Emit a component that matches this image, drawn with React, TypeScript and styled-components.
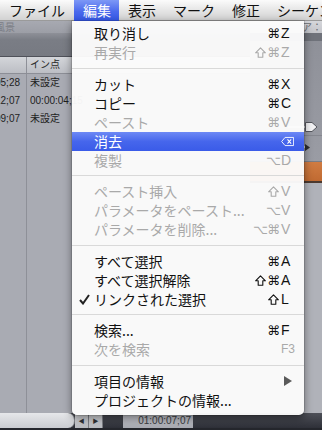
import styled, { createGlobalStyle } from "styled-components";

const GlobalStyle = createGlobalStyle`
  html, body {
    margin: 0;
    padding: 0;
    background: #2e3038;
  }
  body {
    font-family: "Noto Sans CJK JP", "Noto Sans", sans-serif;
  }
`;

type Shortcut = { mods?: string; key?: string; icon?: "delete" };
type Item = {
  label: string;
  disabled?: boolean;
  checked?: boolean;
  active?: boolean;
  sc?: Shortcut;
  submenu?: boolean;
};
type Entry = Item | "sep";

const menuTitles = ["ファイル", "編集", "表示", "マーク", "修正", "シーケンス"];

const entries: Entry[] = [
  { label: "取り消し", sc: { mods: "⌘", key: "Z" } },
  { label: "再実行", disabled: true, sc: { mods: "⇧⌘", key: "Z" } },
  "sep",
  { label: "カット", sc: { mods: "⌘", key: "X" } },
  { label: "コピー", sc: { mods: "⌘", key: "C" } },
  { label: "ペースト", disabled: true, sc: { mods: "⌘", key: "V" } },
  { label: "消去", active: true, sc: { icon: "delete" } },
  { label: "複製", disabled: true, sc: { mods: "⌥", key: "D" } },
  "sep",
  { label: "ペースト挿入", disabled: true, sc: { mods: "⇧", key: "V" } },
  { label: "パラメータをペースト...", disabled: true, sc: { mods: "⌥", key: "V" } },
  { label: "パラメータを削除...", disabled: true, sc: { mods: "⌥⌘", key: "V" } },
  "sep",
  { label: "すべて選択", sc: { mods: "⌘", key: "A" } },
  { label: "すべて選択解除", sc: { mods: "⇧⌘", key: "A" } },
  { label: "リンクされた選択", checked: true, sc: { mods: "⇧", key: "L" } },
  "sep",
  { label: "検索...", sc: { mods: "⌘", key: "F" } },
  { label: "次を検索", disabled: true, sc: { key: "F3" } },
  "sep",
  { label: "項目の情報", submenu: true },
  { label: "プロジェクトの情報..." },
];

const clips = [
  { dur: "00:00:05;28", inPoint: "未設定" },
  { dur: "00:00:12;07", inPoint: "00:00:04;15" },
  { dur: "00:00:09;07", inPoint: "未設定" },
];

function DeleteIcon() {
  return (
    <svg width="16" height="11" viewBox="0 0 16 11">
      <path d="M5 0.5 H15.5 V10.5 H5 L0.8 5.5 Z" fill="none" stroke="#fff" strokeWidth="1.1" />
      <path d="M8 3 L12.5 8 M12.5 3 L8 8" stroke="#fff" strokeWidth="1.3" />
    </svg>
  );
}

function ShiftIcon() {
  return (
    <svg width="11" height="11" viewBox="0 0 11 11">
      <path d="M5.5 0.8 L10.4 5.8 H7.8 V10.3 H3.2 V5.8 H0.6 Z" fill="none" stroke="currentColor" strokeWidth="1.1" strokeLinejoin="round" />
    </svg>
  );
}

function CheckIcon() {
  return (
    <svg width="11" height="11" viewBox="0 0 11 11">
      <path d="M1 6 L4 9.5 L10 1" fill="none" stroke="#222" strokeWidth="2" />
    </svg>
  );
}

export default function App() {
  return (
    <>
      <GlobalStyle />
      <ScreenSld>
        <MenuBarSld>
          {menuTitles.map((t) => (
            <MenuTitleSld key={t} $open={t === "編集"}>
              {t}
            </MenuTitleSld>
          ))}
        </MenuBarSld>

        <MainSld>
          <BrowserSld>
            <TitleStripSld>
              <FadedTitleSld>風景</FadedTitleSld>
            </TitleStripSld>
            <ToolbarSld />
            <HeaderRowSld>
              <DurCellSld />
              <InCellSld>イン点</InCellSld>
            </HeaderRowSld>
            <ListBodySld>
              {clips.map((c) => (
                <ClipRowSld key={c.dur}>
                  <DurCellSld>
                    <span>{c.dur}</span>
                  </DurCellSld>
                  <InCellSld>{c.inPoint}</InCellSld>
                </ClipRowSld>
              ))}
              <ClipRowSld $fill>
                <DurCellSld />
                <InCellSld />
              </ClipRowSld>
            </ListBodySld>
          </BrowserSld>

          <ViewerSld>
            <ViewerStripSld>ア：</ViewerStripSld>
            <ViewerBandSld />
            <ControlsSld>
              <SliderRowSld>
                <TrackSld />
                <svg width="13" height="12" viewBox="0 0 13 12">
                  <path d="M0.5 1.5 H7 L12 6 L7 10.5 H0.5 Z" fill="#f2f2f4" stroke="#55575e" />
                </svg>
              </SliderRowSld>
              <SmallRowSld>
                <TrackSld />
                <svg width="5" height="7" viewBox="0 0 5 7">
                  <path d="M0 0 L5 3.5 L0 7 Z" fill="#2a2c30" />
                </svg>
              </SmallRowSld>
            </ControlsSld>
            <OrangeBarSld />
            <LowerPanelSld />
          </ViewerSld>
        </MainSld>

        <BottomBarSld>
          <ScrollTrackSld />
          <ArrowBtnSld>◀</ArrowBtnSld>
          <ArrowBtnSld>▶</ArrowBtnSld>
          <GapSld />
          <TimecodeSld>01:00:07;07</TimecodeSld>
        </BottomBarSld>

        <DropdownSld>
          {entries.map((e, i) =>
            e === "sep" ? (
              <SeparatorSld key={"sep" + i} />
            ) : (
              <ItemSld key={e.label} $disabled={e.disabled} $active={e.active}>
                <CheckColSld>{e.checked && <CheckIcon />}</CheckColSld>
                <LabelSld>{e.label}</LabelSld>
                {e.sc && (
                  <ShortcutSld>
                    {(e.sc.mods || "").split("").map((m, j) => (
                      <ModSld key={j}>{m === "⇧" ? <ShiftIcon /> : m}</ModSld>
                    ))}
                    <KeySld $small={e.sc.key === "F3"}>
                      {e.sc.icon === "delete" ? <DeleteIcon /> : e.sc.key}
                    </KeySld>
                  </ShortcutSld>
                )}
                {e.submenu && (
                  <SubArrowSld>
                    <svg width="8" height="10" viewBox="0 0 8 10">
                      <path d="M0 0 L8 5 L0 10 Z" fill="#5a5a5a" />
                    </svg>
                  </SubArrowSld>
                )}
              </ItemSld>
            )
          )}
        </DropdownSld>
      </ScreenSld>
    </>
  );
}

const ScreenSld = styled.div`
  position: relative;
  width: 322px;
  height: 430px;
  overflow: hidden;
  display: flex;
  flex-direction: column;
  background: #2e3038;
`;

const MenuBarSld = styled.div`
  display: flex;
  height: 21px;
  flex-shrink: 0;
  background: linear-gradient(#fbfbfb, #e4e4e4 55%, #d2d2d2);
  border-bottom: 1px solid #9a9a9a;
  box-sizing: border-box;
  white-space: nowrap;
`;

const MenuTitleSld = styled.div<{ $open?: boolean }>`
  height: 21px;
  line-height: 21px;
  padding: 0 8px 0 9px;
  font-size: 14px;
  color: ${(p) => (p.$open ? "#fff" : "#111")};
  background: ${(p) => (p.$open ? "linear-gradient(#7d98f6, #4a69ec 55%, #3457e6)" : "transparent")};
  flex-shrink: 0;
  &:first-child {
    padding-right: 9px;
  }
`;

const MainSld = styled.div`
  flex: 1;
  display: grid;
  grid-template-columns: 250px 1fr;
  min-height: 0;
`;

const BrowserSld = styled.div`
  display: flex;
  flex-direction: column;
  background: #a9abb3;
  min-height: 0;
`;

const TitleStripSld = styled.div`
  height: 12px;
  background: linear-gradient(#a7a9b1, #9c9ea6);
  overflow: hidden;
  display: flex;
  align-items: center;
`;

const FadedTitleSld = styled.span`
  font-size: 10px;
  color: #7c7e86;
  margin-left: -5px;
  line-height: 12px;
`;

const ToolbarSld = styled.div`
  height: 23px;
  background: linear-gradient(#8e9098, #7a7d85 30%, #777a82);
  border-bottom: 1px solid #4f5159;
`;

const HeaderRowSld = styled.div`
  display: flex;
  height: 16px;
  background: linear-gradient(#d4d6da, #bcbec4);
  border-bottom: 1px solid #8c8e96;
  font-size: 10px;
  color: #2a2a2a;
  line-height: 16px;
`;

const ListBodySld = styled.div`
  flex: 1;
  display: flex;
  flex-direction: column;
  background: #a9abb3;
`;

const ClipRowSld = styled.div<{ $fill?: boolean }>`
  display: flex;
  height: ${(p) => (p.$fill ? "auto" : "18px")};
  flex: ${(p) => (p.$fill ? 1 : "none")};
  line-height: 18px;
  font-size: 10px;
  color: #1e1e1e;
`;

const DurCellSld = styled.div`
  width: 27px;
  flex-shrink: 0;
  display: flex;
  justify-content: flex-end;
  overflow: hidden;
  border-right: 1px solid #8e9098;
  box-sizing: border-box;
  padding-right: 6px;
  font-family: "Liberation Sans", sans-serif;
  white-space: nowrap;
  & > span {
    flex-shrink: 0;
  }
`;

const InCellSld = styled.div`
  padding-left: 3px;
  white-space: nowrap;
  font-family: "Liberation Sans", "Noto Sans CJK JP", sans-serif;
`;

const ViewerSld = styled.div`
  display: flex;
  flex-direction: column;
  background: #b1b3ba;
`;

const ViewerStripSld = styled.div`
  height: 12px;
  background: linear-gradient(#d6d7db, #c4c5ca);
  font-size: 10px;
  line-height: 12px;
  color: #6a6c72;
  padding-left: 52px;
  white-space: nowrap;
`;

const ViewerBandSld = styled.div`
  height: 8px;
  background: #6f727a;
`;

const ControlsSld = styled.div`
  height: 121px;
  display: flex;
  flex-direction: column;
  padding-top: 78px;
  box-sizing: border-box;
  background: linear-gradient(#8f9199, #9a9ca4);
  border-bottom: 1px solid #7a7c84;
`;

const SliderRowSld = styled.div`
  display: flex;
  align-items: center;
  height: 16px;
  padding-left: 38px;
  border-bottom: 1px solid #85878f;
`;

const SmallRowSld = styled.div`
  display: flex;
  align-items: center;
  height: 14px;
  padding-left: 38px;
  margin-top: 4px;
`;

const TrackSld = styled.div`
  width: 17px;
  height: 2px;
  background: #e4e5e8;
`;

const OrangeBarSld = styled.div`
  height: 21px;
  background: linear-gradient(#d07c42, #c06a32);
  border-bottom: 2px solid #4c3a30;
  box-sizing: border-box;
`;

const LowerPanelSld = styled.div`
  flex: 1;
  background: #b0b2b9;
`;

const BottomBarSld = styled.div`
  display: flex;
  height: 17px;
  flex-shrink: 0;
  background: linear-gradient(#4e5058, #2e3038);
  border-bottom: 2px solid #24262c;
  box-sizing: border-box;
`;

const ScrollTrackSld = styled.div`
  width: 74px;
  background: linear-gradient(#e6e7ea, #c9cbd0);
  border-radius: 0 7px 7px 0;
  border-right: 1px solid #8a8c92;
`;

const ArrowBtnSld = styled.div`
  width: 13px;
  font-size: 6px;
  line-height: 15px;
  text-align: center;
  color: #303236;
  background: linear-gradient(#d8d9dc, #b8bac0);
  border-right: 1px solid #7c7e84;
`;

const GapSld = styled.div`
  width: 20px;
`;

const TimecodeSld = styled.div`
  width: 70px;
  font-size: 10px;
  line-height: 15px;
  text-align: right;
  padding-right: 2px;
  box-sizing: border-box;
  color: #3a3c42;
  font-family: "Liberation Sans", sans-serif;
  background: linear-gradient(#c6c8ce, #a8aab2);
`;

const DropdownSld = styled.div`
  position: absolute;
  top: 21px;
  left: 72px;
  width: 232px;
  padding: 3px 0 5px;
  box-sizing: border-box;
  background: rgba(252, 252, 252, 0.96);
  border-radius: 0 0 5px 5px;
  box-shadow: 0 3px 9px rgba(0, 0, 0, 0.45), 0 0 0 1px rgba(0, 0, 0, 0.12);
`;

const SeparatorSld = styled.div`
  height: 12.5px;
  display: flex;
  align-items: center;
  &::after {
    content: "";
    flex: 1;
    height: 1px;
    background: #d9d9d9;
  }
`;

const ItemSld = styled.div<{ $disabled?: boolean; $active?: boolean }>`
  display: flex;
  align-items: center;
  height: 19px;
  padding-right: 10px;
  font-size: 14px;
  line-height: 19px;
  white-space: nowrap;
  color: ${(p) => (p.$active ? "#fff" : p.$disabled ? "#a9a9a9" : "#111")};
  background: ${(p) => (p.$active ? "linear-gradient(#6d89f5, #4666ec 50%, #3a5be8)" : "transparent")};
`;

const CheckColSld = styled.div`
  width: 22px;
  flex-shrink: 0;
  display: flex;
  justify-content: center;
  padding-left: 2px;
  box-sizing: border-box;
`;

const LabelSld = styled.span`
  flex: 1;
`;

const ShortcutSld = styled.span`
  display: flex;
  align-items: center;
`;

const ModSld = styled.span`
  display: inline-flex;
  justify-content: center;
  align-items: center;
  width: 13px;
  height: 19px;
  font-family: "DejaVu Sans", sans-serif;
  font-size: 13px;
`;

const KeySld = styled.span<{ $small?: boolean }>`
  display: inline-flex;
  align-items: center;
  width: 13px;
  margin-left: 1px;
  font-family: "Liberation Sans", "DejaVu Sans", sans-serif;
  font-size: ${(p) => (p.$small ? "12px" : "14px")};
`;

const SubArrowSld = styled.span`
  display: flex;
  align-items: center;
  padding-right: 2px;
`;
